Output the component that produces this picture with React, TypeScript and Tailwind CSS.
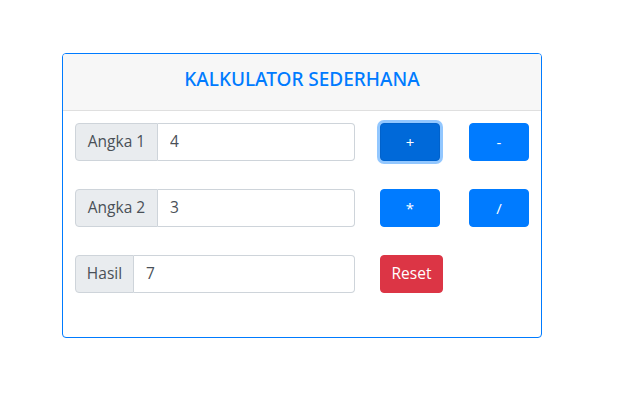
import React, { useState } from 'react';

const InputGroup = ({ label, value, labelW }: { label: string; value: string; labelW: string }) => (
  <div className="flex h-[38px] w-[280px]">
    <span className={`flex items-center justify-center ${labelW} bg-[#e9ecef] border border-[#ced4da] rounded-l-[4px] text-[#495057] text-[15.5px]`}>
      {label}
    </span>
    <input
      readOnly
      value={value}
      className="flex-1 min-w-0 border border-l-0 border-[#ced4da] rounded-r-[4px] px-3 text-[15.5px] text-[#495057] bg-white outline-none"
    />
  </div>
);

const OpButton = ({ label, focused }: { label: string; focused?: boolean }) => (
  <button
    className={
      focused
        ? 'w-[60px] h-[38px] rounded-[4px] bg-[#0069d9] border border-[#0062cc] text-white text-[15px] shadow-[0_0_0_3px_rgba(38,143,255,0.5)]'
        : 'w-[60px] h-[38px] rounded-[4px] bg-[#007bff] border border-[#007bff] text-white text-[15px]'
    }
  >
    {label}
  </button>
);

export default function App() {
  const [a] = useState('4');
  const [b] = useState('3');

  return (
    <div className="w-[619px] h-[409px] bg-white pt-[53px] pl-[62px]" style={{ fontFamily: '"Open Sans", "Noto Sans", sans-serif' }}>
      <div className="w-[480px] h-[285px] border border-[#007bff] rounded-[4px] flex flex-col overflow-hidden">
        {/* Header */}
        <div className="h-[57px] bg-[#f7f7f7] border-b border-[#dfdfdf] flex items-center justify-center pb-[6px]">
          <h4 className="text-[#007bff] text-[19px] font-medium font-['Noto_Sans',sans-serif]">KALKULATOR SEDERHANA</h4>
        </div>

        {/* Body */}
        <div className="flex flex-col gap-[28px] px-[12px] pt-[12px]">
          <div className="flex items-center">
            <InputGroup label="Angka 1" value={a} labelW="w-[83px]" />
            <div className="ml-[25px]"><OpButton label="+" focused /></div>
            <div className="ml-[29px]"><OpButton label="-" /></div>
          </div>
          <div className="flex items-center">
            <InputGroup label="Angka 2" value={b} labelW="w-[83px]" />
            <div className="ml-[25px]"><OpButton label="*" /></div>
            <div className="ml-[29px]"><OpButton label="/" /></div>
          </div>
          <div className="flex items-center">
            <InputGroup label="Hasil" value="7" labelW="w-[59px]" />
            <button className="ml-[25px] w-[63px] h-[38px] rounded-[4px] bg-[#dc3545] border border-[#dc3545] text-white text-[15.5px]">
              Reset
            </button>
          </div>
        </div>
      </div>
    </div>
  );
}
